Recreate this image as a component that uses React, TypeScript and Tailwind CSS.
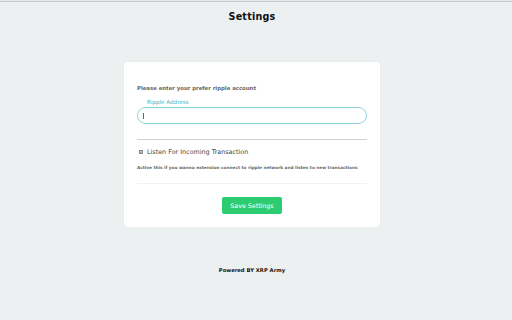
import React from "react";

export default function App() {
  return (
    <div className="w-[512px] h-[320px] bg-[#ecf0f1] overflow-hidden font-['DejaVu_Sans',sans-serif]">
      <div className="h-px bg-[#e4e6e7]" />
      <div className="h-px bg-[#c6c9ca]" />
      <div className="w-[504px] flex flex-col items-center">
        <div className="mt-[9px] h-[11px] leading-[11px] text-[9.6px] font-bold text-[#111] tracking-[0.2px]">
          Settings
        </div>
        <div className="mt-[40px] w-[256px] bg-white rounded-[3px] shadow-[0_0_1px_rgba(0,0,0,0.08)] px-[13px] pt-[23px] pb-[13px] flex flex-col">
          <div className="h-[7px] leading-[7px] text-[5.35px] font-bold text-[#666]">
            Please enter your prefer ripple account
          </div>
          <div className="mt-[7px] pl-[10px] h-[7px] leading-[7px] text-[5.6px] text-[#3fb4c4]">
            Ripple Address
          </div>
          <div className="mt-px h-[17px] rounded-full border border-[#8ed2da] flex items-center pl-[5px]">
            <div className="w-px h-[6px] bg-[#666]" />
          </div>
          <div className="mt-[15px] h-px bg-[#cfd2d3]" />
          <div className="mt-[8px] h-[8px] flex items-center">
            <div className="ml-[2px] w-[4px] h-[4px] border border-[#888] bg-[#ddd] flex items-center justify-center">
              <svg width="4" height="4" viewBox="0 0 4 4">
                <path d="M0.5 2 L1.6 3.1 L3.5 0.8" stroke="#222" strokeWidth="0.9" fill="none" />
              </svg>
            </div>
            <span className="ml-[4px] leading-[8px] text-[6.4px] text-[#444]">
              Listen For Incoming Transaction
            </span>
          </div>
          <div className="mt-[9px] h-[5px] leading-[5px] text-[4.25px] font-bold text-[#666] whitespace-nowrap">
            Active this if you wanna extension connect to ripple network and listen to new transactions
          </div>
          <div className="mt-[13px] h-px bg-[#f1f2f3]" />
          <div className="mt-[13px] flex justify-center">
            <div className="w-[60px] h-[17px] rounded-[2px] bg-[#2ecc71] text-white text-[6.3px] leading-[17px] text-center">
              Save Settings
            </div>
          </div>
        </div>
        <div className="mt-[40px] h-[7px] leading-[7px] text-[5.25px] font-bold text-[#111]">
          Powered BY XRP Army
        </div>
      </div>
    </div>
  );
}
